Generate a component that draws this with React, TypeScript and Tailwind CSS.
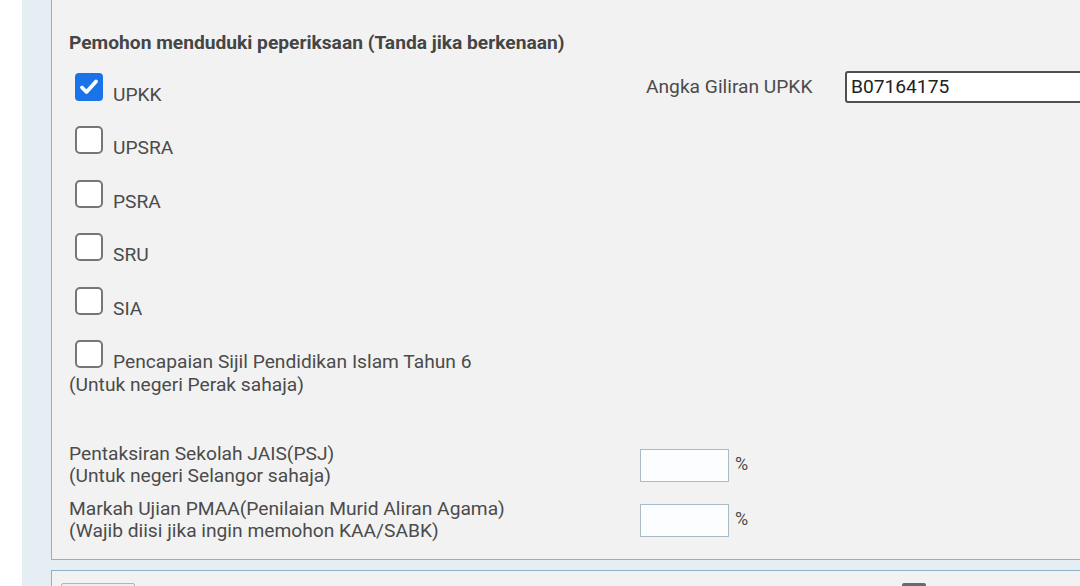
import React from "react";

const font = { fontFamily: "Roboto, 'Noto Sans', sans-serif" };

const Box = ({ checked }: { checked?: boolean }) =>
  checked ? (
    <span className="inline-block align-baseline w-[28px] h-[28px] ml-[6px] rounded-[4px] bg-[#1a73e8] relative">
      <svg viewBox="0 0 28 28" className="absolute inset-0 w-full h-full">
        <path d="M7 14.5l4.5 4.5L21 8.5" fill="none" stroke="#fff" strokeWidth="3.8" strokeLinecap="round" strokeLinejoin="round" />
      </svg>
    </span>
  ) : (
    <span className="inline-block align-baseline w-[28px] h-[28px] ml-[6px] rounded-[5px] border-2 border-[#767676] bg-white" />
  );

const rows = ["UPSRA", "PSRA", "SRU", "SIA"];

const App = () => {
  return (
    <div style={font} className="w-[1080px] h-[586px] overflow-hidden bg-white flex">
      <div className="w-[22px] shrink-0 bg-white" />
      <div className="flex-1 bg-[#e5eff3] pl-[29px]">
        <div className="w-[1100px] bg-[#f2f2f2] border-l border-b border-[#8fb1ca] pl-[17px] pt-[31px] pb-[17px] text-[19.2px] text-[#4b4b4b]">
          <h2 className="text-[19.2px] leading-[24px] font-bold text-[#454545]">
            Pemohon menduduki peperiksaan (Tanda jika berkenaan)
          </h2>

          <div className="mt-[18px] flex items-start h-[53px]">
            <div className="w-[577px] leading-[24px]">
              <Box checked />
              <span className="ml-[10px]">UPKK</span>
            </div>
            <div className="w-[199px] mt-[2px] leading-[24px]">Angka Giliran UPKK</div>
            <div className="-mt-[2px] w-[260px] h-[32px] bg-white border-2 border-[#505050] rounded-[3px] pl-[4px] leading-[28px] text-[#222]">
              B07164175
            </div>
          </div>

          {rows.map((r, i) => (
            <div key={r} className={`leading-[24px] ${i % 2 === 0 ? "h-[54px]" : "h-[53px]"}`}>
              <Box />
              <span className="ml-[10px]">{r}</span>
            </div>
          ))}

          <div className="leading-[24px]">
            <Box />
            <span className="ml-[10px]">Pencapaian Sijil Pendidikan Islam Tahun 6</span>
          </div>
          <div className="leading-[22px] mt-0">(Untuk negeri Perak sahaja)</div>

          <div className="mt-[47px] flex items-start">
            <div className="w-[571px] leading-[22px]">
              <div>Pentaksiran Sekolah JAIS(PSJ)</div>
              <div>(Untuk negeri Selangor sahaja)</div>
            </div>
            <div className="mt-[6px] w-[89px] h-[33px] bg-[#fbfdfe] border border-[#a9bcc6]" />
            <span className="ml-[6px] mt-[10px] text-[18px] leading-[22px]">%</span>
          </div>

          <div className="mt-[11px] flex items-start">
            <div className="w-[571px] leading-[22px]">
              <div>Markah Ujian PMAA(Penilaian Murid Aliran Agama)</div>
              <div>(Wajib diisi jika ingin memohon KAA/SABK)</div>
            </div>
            <div className="mt-[6px] w-[89px] h-[33px] bg-[#fbfdfe] border border-[#a9bcc6]" />
            <span className="ml-[6px] mt-[10px] text-[18px] leading-[22px]">%</span>
          </div>
        </div>

        <div className="mt-[10px] w-[1100px] h-[40px] bg-[#f2f2f2] border-l border-t border-[#8fb1ca] pl-[9px] pt-[12px] flex">
          <div className="w-[74px] h-[20px] border border-[#b5b5b5] bg-[#eeeeee] rounded-[2px]" />
          <div className="ml-[767px] w-[24px] h-[20px] bg-[#6a6a6a] rounded-[2px]" />
        </div>
      </div>
    </div>
  );
};

export default App;
